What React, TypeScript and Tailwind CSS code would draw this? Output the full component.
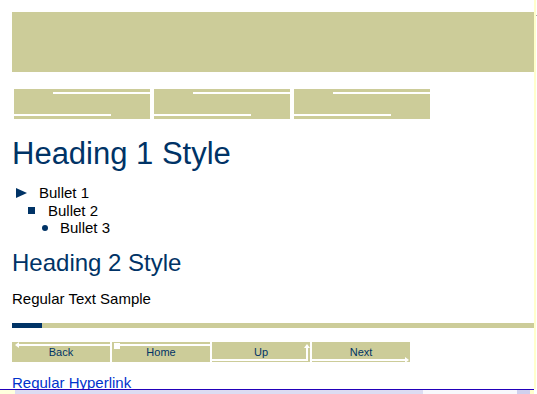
import React from "react";

const Tab = () => (
  <div className="relative w-[136px] h-[30px] bg-[#cccc99]">
    <div className="absolute left-[39px] right-0 top-[3px] h-[2px] bg-white" />
    <div className="absolute left-0 w-[97px] top-[25px] h-[2px] bg-white" />
  </div>
);

const NavButton = ({ label, kind }: { label: string; kind: "back" | "home" | "up" | "next" }) => (
  <div className="relative w-[98px] h-[20px] bg-[#cccc99] text-center text-[11px] leading-[20px] text-[#003366]">
    <svg className="absolute inset-0" width="98" height="20" viewBox="0 0 98 20">
      {kind === "back" && (
        <>
          <rect x="6" y="2" width="92" height="2" fill="#fff" />
          <polygon points="3,3 7,0 7,6" fill="#fff" />
        </>
      )}
      {kind === "home" && (
        <>
          <rect x="2" y="1" width="6" height="6" fill="#fff" />
          <rect x="8" y="2" width="90" height="2" fill="#fff" />
        </>
      )}
      {kind === "up" && (
        <>
          <rect x="0" y="17" width="96" height="2" fill="#fff" />
          <rect x="94" y="5" width="2" height="14" fill="#fff" />
          <polygon points="95,2 92,6 98,6" fill="#fff" />
        </>
      )}
      {kind === "next" && (
        <>
          <rect x="0" y="17" width="93" height="2" fill="#fff" />
          <polygon points="97,18 93,15 93,21" fill="#fff" />
        </>
      )}
    </svg>
    <span className="relative">{label}</span>
  </div>
);

export default function App() {
  return (
    <div
      className="w-[537px] h-[394px] overflow-hidden bg-white flex flex-col"
      style={{ fontFamily: '"Liberation Sans", Arial, sans-serif' }}
    >
      <div className="flex h-[389px] shrink-0 overflow-hidden">
        <div className="w-[534px] shrink-0 pl-[12px] pt-[12px]">
          <div className="h-[60px] bg-[#cccc99]" />
          <div className="mt-[17px] ml-[2px] flex gap-[4px]">
            <Tab />
            <Tab />
            <Tab />
          </div>
          <h1 className="mt-[17px] text-[31px] leading-[36px] text-[#003366] whitespace-nowrap">Heading 1 Style</h1>
          <ul className="mt-[12px] text-[15px] leading-[17.5px] text-black">
            <li className="flex items-center">
              <svg className="ml-[4px] mr-[12px]" width="11" height="10" viewBox="0 0 11 10">
                <polygon points="0,0 11,5 0,10" fill="#003366" />
              </svg>
              Bullet 1
            </li>
            <li className="flex items-center">
              <span className="ml-[16px] mr-[13px] w-[7px] h-[7px] bg-[#003366]" />
              Bullet 2
            </li>
            <li className="flex items-center">
              <span className="ml-[30px] mr-[12px] w-[6px] h-[6px] rounded-full bg-[#003366]" />
              Bullet 3
            </li>
          </ul>
          <h2 className="mt-[12.5px] text-[24px] leading-[28px] text-[#003366] whitespace-nowrap">Heading 2 Style</h2>
          <p className="mt-[13px] text-[15px] leading-[18px] text-black">Regular Text Sample</p>
          <div className="mt-[15px] h-[5px] flex bg-[#cccc99]">
            <div className="w-[30px] bg-[#003366]" />
          </div>
          <div className="mt-[14px] flex gap-[2px]">
            <NavButton label="Back" kind="back" />
            <NavButton label="Home" kind="home" />
            <NavButton label="Up" kind="up" />
            <NavButton label="Next" kind="next" />
          </div>
          <div className="mt-[12px] text-[15px] leading-[18px]">
            <a href="#" className="text-[#0033cc] underline">
              Regular Hyperlink
            </a>
          </div>
        </div>
        <div className="w-[2px] shrink-0 bg-[#ffffcc]" />
        <div className="flex-1 relative">
          <div className="absolute top-[15px] left-0 w-full h-[1px] bg-[#aaaaaa]" />
        </div>
      </div>
      <div className="h-[1px] shrink-0 w-[534px] bg-[#2200bb]" />
      <div className="flex h-[4px] shrink-0">
        <div className="w-[15px] bg-[#ffffdd]" />
        <div className="w-[408px] bg-[#dcdcf2]" />
        <div className="w-[94px] bg-[#f8f8fc]" />
        <div className="w-[13px] bg-[#d0d0ee]" />
        <div className="w-[4px] bg-[#ffffcc]" />
      </div>
    </div>
  );
}
